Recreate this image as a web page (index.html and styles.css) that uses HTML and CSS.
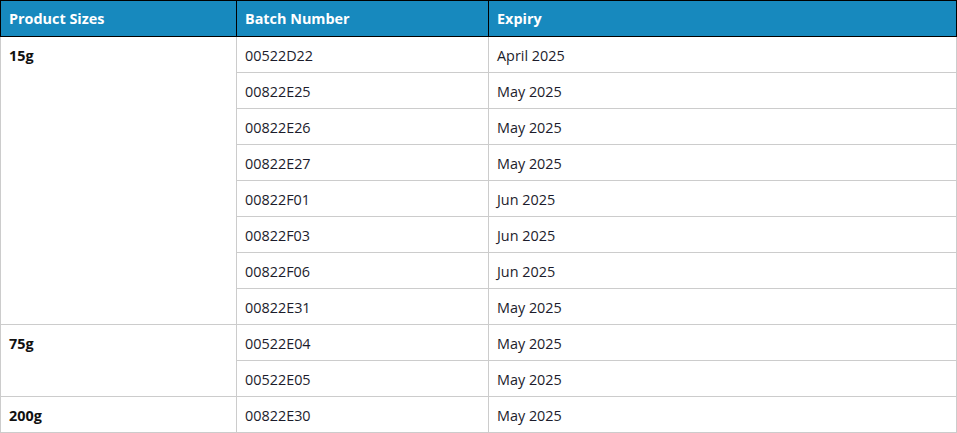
FILE: index.html
```html
<!DOCTYPE html>
<html>
<head>
<meta charset="utf-8">
<link rel="stylesheet" href="styles.css">
</head>
<body>
<table class="batches">
  <colgroup>
    <col class="c-size">
    <col class="c-batch">
    <col class="c-exp">
  </colgroup>
  <thead>
    <tr><th>Product Sizes</th><th>Batch Number</th><th>Expiry</th></tr>
  </thead>
  <tbody>
    <tr><td class="size" rowspan="8">15g</td><td>00522D22</td><td>April 2025</td></tr>
    <tr><td>00822E25</td><td>May 2025</td></tr>
    <tr><td>00822E26</td><td>May 2025</td></tr>
    <tr><td>00822E27</td><td>May 2025</td></tr>
    <tr><td>00822F01</td><td>Jun 2025</td></tr>
    <tr><td>00822F03</td><td>Jun 2025</td></tr>
    <tr><td>00822F06</td><td>Jun 2025</td></tr>
    <tr><td>00822E31</td><td>May 2025</td></tr>
    <tr><td class="size" rowspan="2">75g</td><td>00522E04</td><td>May 2025</td></tr>
    <tr><td>00522E05</td><td>May 2025</td></tr>
    <tr><td class="size">200g</td><td>00822E30</td><td>May 2025</td></tr>
  </tbody>
</table>
</body>
</html>
```
FILE: styles.css
```css
html, body {
  margin: 0;
  padding: 0;
  background: #fff;
}
.batches {
  border-collapse: collapse;
  width: 956px;
  table-layout: fixed;
  font-family: "Open Sans", "Liberation Sans", sans-serif;
  font-size: 14.4px;
  line-height: 19px;
  color: #1c1c2c;
}
.c-size { width: 236px; }
.c-batch { width: 252px; }
.c-exp { width: 468px; }
.batches th {
  background: #1789be;
  color: #fff;
  font-weight: 700;
  text-align: left;
  padding: 8px;
  border: 1px solid #000;
}
.batches td {
  padding: 9px 8px 7px 8px;
  border: 1px solid #ccc;
  vertical-align: top;
}
.batches td.size {
  font-weight: 700;
  color: #111;
}
```
